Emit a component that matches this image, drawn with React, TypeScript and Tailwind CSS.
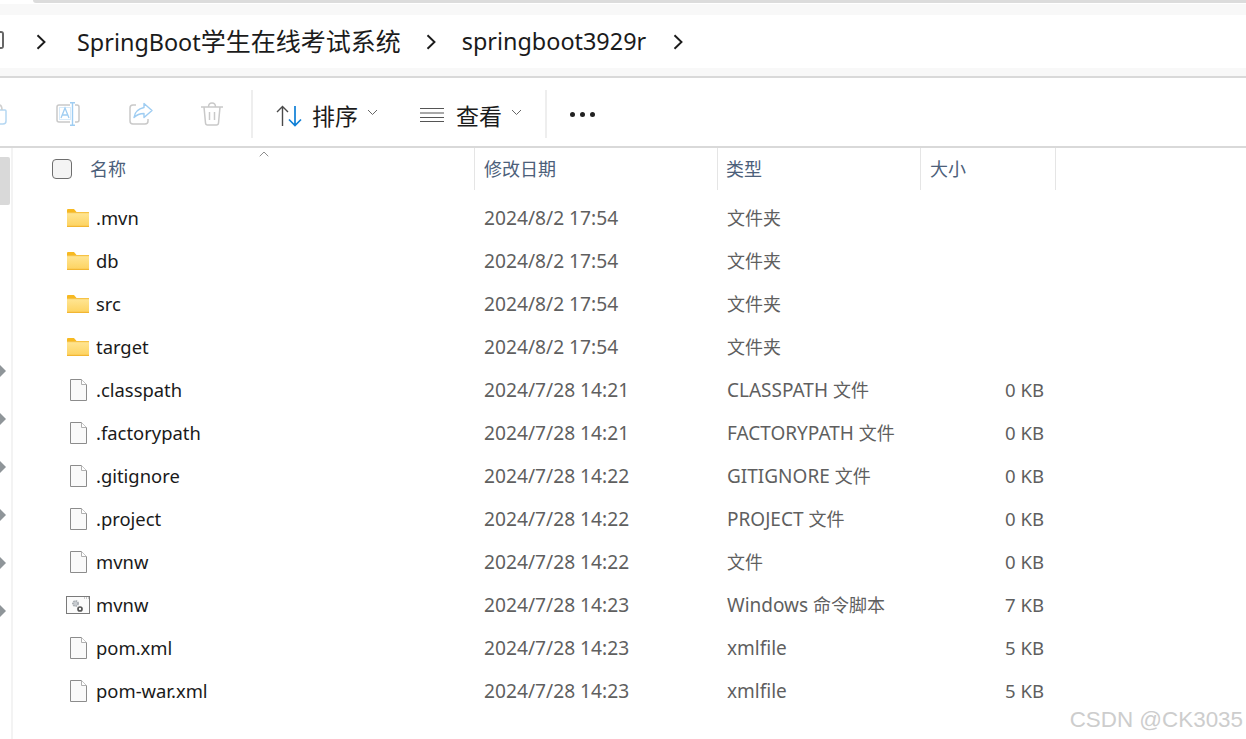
import { ChevronUp } from 'lucide-react';

const FONT = "font-['Noto_Sans','Noto_Sans_CJK_SC',sans-serif]";

interface FileRow {
  name: string;
  date: string;
  type: string;
  typeCn?: string;
  size?: string;
  icon: 'folder' | 'file' | 'script';
}

const rows: FileRow[] = [
  { name: '.mvn', date: '2024/8/2 17:54', type: '', typeCn: '文件夹', icon: 'folder' },
  { name: 'db', date: '2024/8/2 17:54', type: '', typeCn: '文件夹', icon: 'folder' },
  { name: 'src', date: '2024/8/2 17:54', type: '', typeCn: '文件夹', icon: 'folder' },
  { name: 'target', date: '2024/8/2 17:54', type: '', typeCn: '文件夹', icon: 'folder' },
  { name: '.classpath', date: '2024/7/28 14:21', type: 'CLASSPATH ', typeCn: '文件', size: '0 KB', icon: 'file' },
  { name: '.factorypath', date: '2024/7/28 14:21', type: 'FACTORYPATH ', typeCn: '文件', size: '0 KB', icon: 'file' },
  { name: '.gitignore', date: '2024/7/28 14:22', type: 'GITIGNORE ', typeCn: '文件', size: '0 KB', icon: 'file' },
  { name: '.project', date: '2024/7/28 14:22', type: 'PROJECT ', typeCn: '文件', size: '0 KB', icon: 'file' },
  { name: 'mvnw', date: '2024/7/28 14:22', type: '', typeCn: '文件', size: '0 KB', icon: 'file' },
  { name: 'mvnw', date: '2024/7/28 14:23', type: 'Windows ', typeCn: '命令脚本', size: '7 KB', icon: 'script' },
  { name: 'pom.xml', date: '2024/7/28 14:23', type: 'xmlfile', size: '5 KB', icon: 'file' },
  { name: 'pom-war.xml', date: '2024/7/28 14:23', type: 'xmlfile', size: '5 KB', icon: 'file' },
];

function Chevron({ className }: { className?: string }) {
  return (
    <svg width="10" height="16" viewBox="0 0 10 16" className={`shrink-0 ${className ?? ''}`}>
      <path d="M1.5 1.2 L8.5 8 L1.5 14.8" fill="none" stroke="#1b1b1b" strokeWidth="1.9" />
    </svg>
  );
}

function SmallChevron({ className }: { className?: string }) {
  return (
    <svg width="11" height="7" viewBox="0 0 11 7" className={`shrink-0 ${className ?? ''}`}>
      <path d="M1 1 L5.5 5.5 L10 1" fill="none" stroke="#666" strokeWidth="1" />
    </svg>
  );
}

function FolderIcon() {
  return (
    <svg width="22" height="18" viewBox="0 0 22 18">
      <defs>
        <linearGradient id="folderBody" x1="0" y1="0" x2="0" y2="1">
          <stop offset="0" stopColor="#ffe593" />
          <stop offset="1" stopColor="#fdd25e" />
        </linearGradient>
      </defs>
      <path d="M0 1 q0 -1 1 -1 h6 l2.5 3 H0z" fill="#f7b921" />
      <rect x="0" y="4" width="22" height="14" fill="url(#folderBody)" />
      <rect x="0" y="3" width="22" height="1.2" fill="#f6c245" />
      <rect x="0" y="16.8" width="22" height="1.2" fill="#f2b632" />
    </svg>
  );
}

function FileIcon() {
  return (
    <svg width="17" height="22" viewBox="0 0 17 22">
      <path d="M.5.5 h11 l5 5 v16 H.5z" fill="#fafafa" stroke="#8c8c8c" />
      <path d="M11.5 .5 v5 h5" fill="#fff" stroke="#b0b0b0" />
    </svg>
  );
}

function ScriptIcon() {
  return (
    <svg width="24" height="18" viewBox="0 0 24 18">
      <rect x=".5" y=".5" width="23" height="17" fill="#fbfbfb" stroke="#7a7a7a" />
      <path d="M18 2 h1 M20 2 h1 M22 2 h1" stroke="#999" />
      <circle cx="9.5" cy="7.5" r="2.6" fill="#c8ccd0" stroke="#a9aeb3" strokeWidth="1.8" strokeDasharray="1.6 .8" />
      <circle cx="14" cy="13" r="2" fill="#fff" stroke="#555" strokeWidth="1.7" />
    </svg>
  );
}

function RowIcon({ icon }: { icon: FileRow['icon'] }) {
  if (icon === 'folder') return <FolderIcon />;
  if (icon === 'script') return <ScriptIcon />;
  return <FileIcon />;
}

function ToolbarIcons() {
  return (
    <>
      <div className="w-[7px] overflow-hidden flex justify-end shrink-0">
        <svg width="14" height="24" viewBox="0 0 14 24" className="shrink-0">
          <path d="M3 8 h9 q1 0 1 1 v10 q0 3 -3 3 H3" fill="none" stroke="#b5d7f2" strokeWidth="1.5" />
          <path d="M3 8 q0 -5 3 -5 q3 0 3 5" fill="none" stroke="#cfcfcf" strokeWidth="1.5" />
        </svg>
      </div>
      <svg width="24" height="24" viewBox="0 0 24 24" className="ml-[49px] shrink-0">
        <path d="M14 3 H3 q-2 0 -2 2 v13 q0 2 2 2 h11 M19 3 h2 q2 0 2 2 v13 q0 2 -2 2 h-2" fill="none" stroke="#c9c9c9" strokeWidth="1.5" />
        <rect x="3.5" y="5.5" width="11" height="12" fill="none" stroke="#d8ebfa" />
        <path d="M5 16 L9 6 l4 10 M6.3 13 h5.4" fill="none" stroke="#9fcdf2" strokeWidth="1.3" />
        <path d="M16.5 1 v22 M14 .8 h5 M14 23.2 h5" fill="none" stroke="#9fcdf2" strokeWidth="1.4" />
      </svg>
      <svg width="24" height="24" viewBox="0 0 24 24" className="ml-[49px] shrink-0">
        <path d="M7 3 H4 q-3 0 -3 3 v13 q0 3 3 3 h12 q3 0 3 -3 v-2" fill="none" stroke="#c9c9c9" strokeWidth="1.5" />
        <path d="M15 1.5 l8 7 l-8 7 v-4 q-6 0 -10 4 q1 -8 10 -10z" fill="none" stroke="#9fcdf2" strokeWidth="1.4" strokeLinejoin="round" />
      </svg>
      <svg width="22" height="24" viewBox="0 0 22 24" className="ml-[48px] shrink-0">
        <path d="M0 5 h22 M7.5 5 q0 -4 3.5 -4 q3.5 0 3.5 4 M3 5 l1.5 16 q.2 2 2 2 h9 q1.8 0 2 -2 l1.5 -16 M8.5 10 v8 M13.5 10 v8" fill="none" stroke="#c9c9c9" strokeWidth="1.5" />
      </svg>
    </>
  );
}

export default function App() {
  return (
    <div className={`w-[1246px] h-[739px] bg-white overflow-hidden relative flex flex-col text-[#1b1b1b] ${FONT}`}>
      {/* window top edge */}
      <div className="h-[4px] shrink-0 pl-[33px]">
        <div className="h-[3px] bg-[#dcdcdc] rounded-bl-[3px]" />
      </div>
      {/* address bar */}
      <div className="h-[11px] bg-[#f8f8f8] shrink-0" />
      <div className="h-[53px] shrink-0 flex items-center">
        <div className="w-[4px] h-[18px] -mt-[4px] border-y-2 border-r-2 border-[#666] rounded-r-[3px] mr-[32px] shrink-0" />
        <Chevron />
        <span className="ml-[31px] leading-none whitespace-nowrap">
          <span className="text-[23.4px]">SpringBoot</span>
          <span className="text-[25px]">学生在线考试系统</span>
        </span>
        <Chevron className="ml-[25px]" />
        <span className="ml-[26px] text-[23.4px] leading-none">springboot3929r</span>
        <Chevron className="ml-[27px]" />
      </div>
      <div className="h-[8px] bg-[#f8f8f8] shrink-0" />
      <div className="h-[2px] bg-[#d9d9d9] shrink-0" />

      {/* command bar */}
      <div className="h-[68px] shrink-0 flex items-center pt-[4px]">
        <ToolbarIcons />
        <div className="ml-[28px] w-[2px] h-[48px] bg-[#eeeeee] shrink-0" />
        <svg width="26" height="22" viewBox="0 0 26 22" className="ml-[23px] mt-[3px] shrink-0">
          <path d="M6.5 21 V1.5 M1 7 L6.5 1.5 L12 7" fill="none" stroke="#4a4a4a" strokeWidth="1.4" />
          <path d="M19 1 V20.5 M13 14.5 l6 6 l6 -6" fill="none" stroke="#0f7fd6" strokeWidth="1.7" />
        </svg>
        <span className="ml-[10px] text-[23px] leading-none mt-[4px]">排序</span>
        <SmallChevron className="ml-[9px] -mt-[3px]" />
        <svg width="24" height="16" viewBox="0 0 24 16" className="ml-[42px] mt-[2px] shrink-0">
          <path d="M0 1.5 h24 M0 6 h24 M0 10.5 h24 M0 14.5 h24" stroke="#555" strokeWidth="1.1" />
        </svg>
        <span className="ml-[12px] text-[23px] leading-none mt-[4px]">查看</span>
        <SmallChevron className="ml-[9px] -mt-[3px]" />
        <div className="ml-[23px] w-[2px] h-[48px] bg-[#eeeeee] shrink-0" />
        <div className="ml-[23px] flex gap-[5px]">
          <div className="w-[5px] h-[5px] rounded-full bg-[#222]" />
          <div className="w-[5px] h-[5px] rounded-full bg-[#222]" />
          <div className="w-[5px] h-[5px] rounded-full bg-[#222]" />
        </div>
      </div>
      <div className="h-[2px] bg-[#d9d9d9] shrink-0" />

      <div className="flex-1 flex min-h-0">
        {/* nav pane edge */}
        <div className="w-[13px] shrink-0 border-r-2 border-[#f3f3f3] pt-[9px] flex flex-col">
          <div className="w-[10px] h-[48px] bg-[#d9d9d9] rounded-r-[2px]" />
          <div className="mt-[160px] flex flex-col gap-[36px]">
            {[0, 1, 2, 3, 4, 5].map((i) => (
              <div key={i} className="w-0 h-0 border-y-[6px] border-y-transparent border-l-[6px] border-l-[#8f9599]" />
            ))}
          </div>
        </div>

        <div className="flex-1 min-w-0 flex flex-col relative">
          <ChevronUp size={16} strokeWidth={1} className="absolute left-[243px] -top-[2px] text-[#555]" />
          {/* column headers */}
          <div className="h-[42px] shrink-0 flex text-[18px] text-[#4c607a]">
            <div className="w-[462px] flex items-center pl-[39px] border-r-[1px] border-[#e5e5e5]">
              <div className="w-[20px] h-[20px] rounded-[4px] border border-[#6e6e6e] bg-[#f4f4f4]" />
              <span className="ml-[18px]">名称</span>
            </div>
            <div className="w-[243px] flex items-center pl-[9px] border-r-[1px] border-[#e5e5e5]">修改日期</div>
            <div className="w-[203px] flex items-center pl-[8px] border-r-[1px] border-[#e5e5e5]">类型</div>
            <div className="w-[135px] flex items-center pl-[9px] border-r-[1px] border-[#e5e5e5]">大小</div>
          </div>
          {/* file rows */}
          <div className="pt-[7px]">
            {rows.map((r, i) => (
              <div key={i} className="h-[43px] flex items-center text-[18.4px]">
                <div className="w-[24px] ml-[53px] flex justify-center shrink-0 -mt-[1px]">
                  <RowIcon icon={r.icon} />
                </div>
                <div className="ml-[6px] w-[388px] -mt-[2px] text-[#1a1a1a]">{r.name}</div>
                <div className="w-[243px] text-[#5f5f5f] text-[19.2px]">{r.date}</div>
                <div className="w-[203px] text-[#5f5f5f] text-[19px] whitespace-pre">
                  {r.type}
                  <span className="text-[18px]">{r.typeCn}</span>
                </div>
                <div className="w-[114px] -mt-[2px] text-right text-[#5f5f5f] text-[18.6px]">{r.size}</div>
              </div>
            ))}
          </div>
        </div>
      </div>

      {/* watermark */}
      <div className="absolute right-[3px] bottom-[8px] text-[22.4px] leading-none text-[#cdcdcd] font-['Liberation_Sans',sans-serif]">
        CSDN @CK3035
      </div>
    </div>
  );
}
